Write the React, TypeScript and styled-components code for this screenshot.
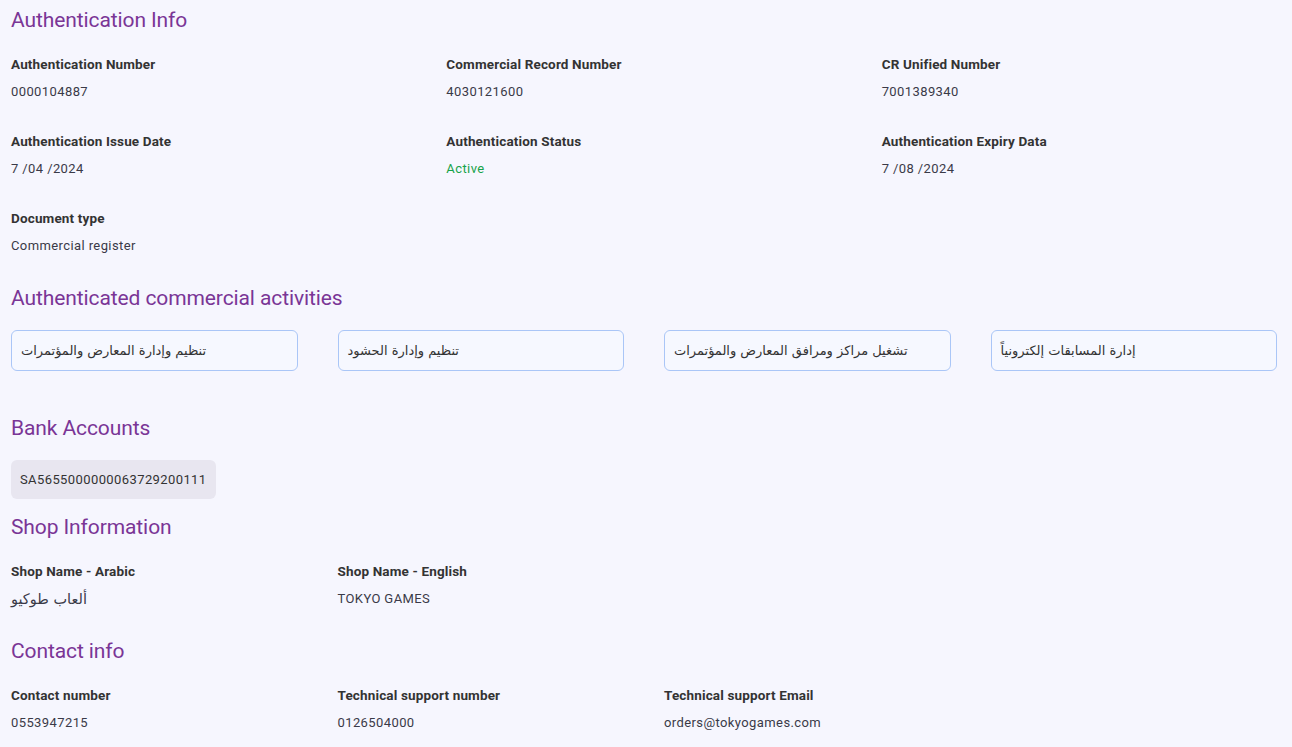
import styled, { createGlobalStyle } from 'styled-components';

const GlobalStyle = createGlobalStyle`
  html, body {
    margin: 0;
    padding: 0;
    background-color: #f6f6fe;
  }
  body {
    font-family: Roboto, "DejaVu Sans", sans-serif;
    color: #333;
  }
`;

const Page = styled.div`
  padding: 0 15px 20px 11px;
  min-height: 747px;
  box-sizing: border-box;
  background-color: #f6f6fe;
`;

const SectionTitle = styled.h2`
  margin: 0;
  font-size: 21px;
  font-weight: 400;
  color: #7a3596;
  line-height: 40px;
  letter-spacing: -0.1px;
`;

const InfoGrid = styled.div<{ $cols: number }>`
  display: grid;
  grid-template-columns: repeat(${p => p.$cols}, 1fr);
  column-gap: 40px;
  margin-bottom: 7px;
`;

const Field = styled.div`
  display: flex;
  flex-direction: column;
  padding: 16px 0 17px;
`;

const Label = styled.div`
  font-size: 13.5px;
  font-weight: 700;
  color: #333;
  line-height: 16px;
  letter-spacing: 0.15px;
`;

const Value = styled.div<{ $green?: boolean; $arabic?: boolean }>`
  font-size: ${p => (p.$arabic ? '14.5px' : '13px')};
  font-family: ${p => (p.$arabic ? '"DejaVu Sans", sans-serif' : 'inherit')};
  color: ${p => (p.$green ? '#17a34a' : '#3a3a48')};
  line-height: 16px;
  margin-top: 12px;
  letter-spacing: 0.4px;
`;

const ActivityGrid = styled.div`
  display: grid;
  grid-template-columns: repeat(4, 1fr);
  column-gap: 40px;
  padding: 12px 0 37px;
`;

const ActivityCard = styled.div`
  height: 41px;
  box-sizing: border-box;
  border: 1px solid #aac6f7;
  border-radius: 6px;
  background-color: #f6f8ff;
  padding: 0 9px;
  display: flex;
  align-items: center;
  font-size: 13px;
  color: #333;
  font-family: "DejaVu Sans", sans-serif;
`;

const ChipRow = styled.div`
  display: flex;
  padding: 12px 0 8px;
`;

const Chip = styled.div`
  background-color: #e8e6f0;
  border-radius: 6px;
  height: 39px;
  padding: 0 9px;
  display: flex;
  align-items: center;
  font-size: 13px;
  color: #333;
  letter-spacing: 0.4px;
`;

const authFields = [
  { label: 'Authentication Number', value: '0000104887' },
  { label: 'Commercial Record Number', value: '4030121600' },
  { label: 'CR Unified Number', value: '7001389340' },
  { label: 'Authentication Issue Date', value: '7 /04 /2024' },
  { label: 'Authentication Status', value: 'Active', green: true },
  { label: 'Authentication Expiry Data', value: '7 /08 /2024' },
  { label: 'Document type', value: 'Commercial register' },
];

const activities = [
  'تنظيم وإدارة المعارض والمؤتمرات',
  'تنظيم وإدارة الحشود',
  'تشغيل مراكز ومرافق المعارض والمؤتمرات',
  'إدارة المسابقات إلكترونياً',
];

const shopFields = [
  { label: 'Shop Name - Arabic', value: 'ألعاب طوكيو', arabic: true },
  { label: 'Shop Name - English', value: 'TOKYO GAMES' },
];

const contactFields = [
  { label: 'Contact number', value: '0553947215' },
  { label: 'Technical support number', value: '0126504000' },
  { label: 'Technical support Email', value: 'orders@tokyogames.com' },
];

const App: React.FC = () => {
  return (
    <>
      <GlobalStyle />
      <Page>
        <SectionTitle>Authentication Info</SectionTitle>
        <InfoGrid $cols={3}>
          {authFields.map(f => (
            <Field key={f.label}>
              <Label>{f.label}</Label>
              <Value $green={f.green}>{f.value}</Value>
            </Field>
          ))}
        </InfoGrid>

        <SectionTitle>Authenticated commercial activities</SectionTitle>
        <ActivityGrid>
          {activities.map(a => (
            <ActivityCard key={a}>{a}</ActivityCard>
          ))}
        </ActivityGrid>

        <SectionTitle>Bank Accounts</SectionTitle>
        <ChipRow>
          <Chip>SA5655000000063729200111</Chip>
        </ChipRow>

        <SectionTitle>Shop Information</SectionTitle>
        <InfoGrid $cols={4}>
          {shopFields.map(f => (
            <Field key={f.label}>
              <Label>{f.label}</Label>
              <Value $arabic={f.arabic}>{f.value}</Value>
            </Field>
          ))}
        </InfoGrid>

        <SectionTitle>Contact info</SectionTitle>
        <InfoGrid $cols={4}>
          {contactFields.map(f => (
            <Field key={f.label}>
              <Label>{f.label}</Label>
              <Value>{f.value}</Value>
            </Field>
          ))}
        </InfoGrid>
      </Page>
    </>
  );
};

export default App;
